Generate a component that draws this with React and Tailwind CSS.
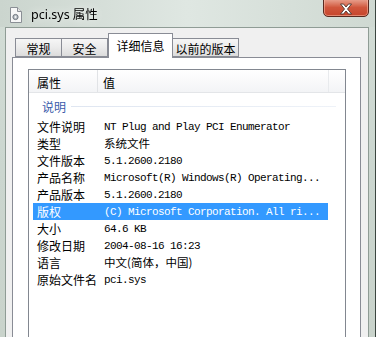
import React from "react";

const rows = [
  { label: "文件说明", value: "NT Plug and Play PCI Enumerator" },
  { label: "类型", value: "系统文件", cjk: true },
  { label: "文件版本", value: "5.1.2600.2180" },
  { label: "产品名称", value: "Microsoft(R) Windows(R) Operating..." },
  { label: "产品版本", value: "5.1.2600.2180" },
  { label: "版权", value: "(C) Microsoft Corporation. All ri...", selected: true },
  { label: "大小", value: "64.6 KB" },
  { label: "修改日期", value: "2004-08-16 16:23" },
  { label: "语言", value: "中文(简体，中国)", cjk: true },
  { label: "原始文件名", value: "pci.sys" },
];

const tabs = [
  { label: "常规", cls: "w-[47px] h-[19px] border" },
  { label: "安全", cls: "w-[46px] h-[19px] border-y border-r" },
  { label: "详细信息", cls: "w-[65px] h-[25px] -mb-px border border-b-0 bg-white z-10", active: true },
  { label: "以前的版本", cls: "w-[66px] h-[19px] border-y border-r" },
];

function FileIcon() {
  return (
    <svg width="14" height="16" viewBox="0 0 14 16">
      <path d="M1.5 0.5h7l4 4v11h-11z" fill="#f7f7f7" stroke="#8a8f95" />
      <path d="M8.5 0.5v4h4" fill="#e4e4e4" stroke="#8a8f95" />
      <circle cx="6.5" cy="10" r="2.6" fill="#b9bfc6" stroke="#6f767e" />
      <circle cx="6.5" cy="10" r="0.9" fill="#f7f7f7" />
    </svg>
  );
}

function CloseButton() {
  return (
    <div className="absolute left-[323px] top-[-2px] flex h-[19px] w-[46px] items-center justify-center rounded-b-[5px] border border-[#5a2a20] bg-gradient-to-b from-[#e9a593] via-[#d0563c] to-[#c6452c] shadow-[inset_0_0_0_1px_rgba(255,200,180,0.5)]">
      <svg width="14" height="12" viewBox="0 0 14 12" className="mt-[2px]">
        <path
          d="M1.5 1h3l2.5 3 2.5-3h3l-4 5 4 5h-3l-2.5-3-2.5 3h-3l4-5z"
          fill="#ffffff"
          stroke="#4a3530"
          strokeWidth="0.9"
          strokeLinejoin="round"
        />
      </svg>
    </div>
  );
}

export default function App() {
  return (
    <div className="relative h-[337px] w-[376px] overflow-hidden border-r border-[#3b4640] bg-gradient-to-b from-[#d3ddd6] via-[#cbd6cf] to-[#c9d3cb] font-['Noto_Sans','Noto_Sans_CJK_SC',sans-serif] text-black">
      {/* title bar */}
      <div className="flex h-[27px] items-center gap-[8px] bg-gradient-to-r from-[#cbd5ce] via-[#dfe7e2] to-[#cfd9d2] pl-[9px] pt-[3px]">
        <FileIcon />
        <span className="text-[12.5px] leading-none drop-shadow-[0_0_4px_rgba(255,255,255,0.9)]">
          pci.sys 属性
        </span>
      </div>
      <CloseButton />

      {/* window body */}
      <div className="flex h-[310px] pl-[5px] pr-[6px]">
        <div className="flex flex-1 flex-col border-x border-t border-[#8f9c95] bg-[#f0f0f0] pl-[6px] pr-[7px]">
          {/* tabs */}
          <div className="flex h-[29px] shrink-0 items-end pl-[3px] font-['Noto_Sans_CJK_SC',sans-serif] text-[12px] leading-none">
            {tabs.map((t) => (
              <div
                key={t.label}
                className={
                  "relative flex justify-center border-[#898c95] " +
                  (t.active
                    ? "pt-[6px] "
                    : "bg-gradient-to-b from-[#f6f6f6] via-[#ebebeb] to-[#dcdcdc] pt-[4px] ") +
                  t.cls
                }
              >
                {t.label}
              </div>
            ))}
          </div>

          {/* tab panel */}
          <div className="flex-1 border border-[#898c95] bg-white pl-[15px] pr-[14px] pt-[11px]">
            <div className="h-[300px] border border-[#828790] bg-white font-['Noto_Sans_CJK_SC',sans-serif] text-[12px] leading-none">
              {/* header */}
              <div className="flex h-[23px] border-b border-[#e3e5e8] bg-gradient-to-b from-white to-[#f3f4f6]">
                <div className="flex w-[69px] items-center border-r border-[#e1e3e6] pl-[8px] pt-[4px]">
                  属性
                </div>
                <div className="flex w-[231px] items-center border-r border-[#e8eaed] pl-[5px] pt-[4px]">
                  值
                </div>
                <div className="flex-1" />
              </div>

              {/* group */}
              <div className="flex h-[25px] items-center pl-[13px] pr-[9px] pt-[2px]">
                <span className="text-[#3a5bab]">说明</span>
                <div className="ml-[5px] h-px flex-1 bg-gradient-to-r from-[#dfe6f1] to-[#eef2f8]" />
              </div>

              {/* rows */}
              {rows.map((r) => (
                <div
                  key={r.label}
                  className={
                    "ml-[4px] flex h-[17px] w-[295px] items-center pt-[1px] " +
                    (r.selected ? "bg-[#3399ff] text-white" : "")
                  }
                >
                  <div className="w-[71px] pl-[4px]">{r.label}</div>
                  <div
                    className={
                      r.cjk
                        ? "text-[11.5px]"
                        : "font-['Liberation_Mono',monospace] text-[11px] tracking-[-0.6px]"
                    }
                  >
                    {r.value}
                  </div>
                </div>
              ))}
            </div>
          </div>
        </div>
      </div>
    </div>
  );
}
